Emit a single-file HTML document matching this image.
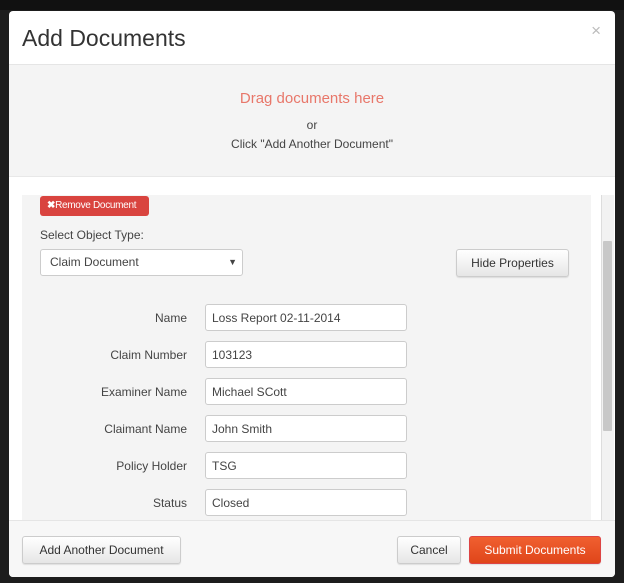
<!DOCTYPE html>
<html><head><style>
body{margin:0;width:624px;height:583px;background:#1d1d1d;font-family:"Liberation Sans",sans-serif;position:relative;overflow:hidden}
.topbar{position:absolute;left:0;top:0;width:624px;height:10px;background:#111}
.modal{position:absolute;left:9px;top:11px;width:606px;height:566px;background:#fff;border-radius:4px;overflow:hidden}
.hdr{position:absolute;left:0;top:0;width:606px;height:53px;border-bottom:1px solid #e5e5e5;box-shadow:0 1px 3px rgba(0,0,0,.08)}
.hdr h1{margin:0;position:absolute;left:13px;top:14px;font-size:23px;font-weight:normal;color:#333}
.x{position:absolute;right:14px;top:10px;color:#bbb;font-size:17px}
.drop{position:absolute;left:0;top:54px;width:606px;height:111px;background:#f4f4f4;border-bottom:1px solid #e8e8e8;text-align:center}
.drag{position:absolute;top:25px;width:100%;color:#e8776a;font-size:15px}
.or{position:absolute;top:53px;width:100%;color:#444;font-size:12px}
.click{position:absolute;top:72px;width:100%;color:#444;font-size:12px}
.panel{position:absolute;left:13px;top:184px;width:569px;height:330px;background:#f4f4f4}
.scroll{position:absolute;left:592px;top:184px;width:12px;height:330px;background:#f2f2f2;border-left:1px solid #ddd}
.thumb{position:absolute;left:594px;top:230px;width:9px;height:190px;background:#c8c8c8;border-radius:1px}
.rm{position:absolute;left:31px;top:185px;width:109px;height:20px;background:#d9443f;border-radius:3px;color:#fff;font-size:10px;line-height:20px;text-indent:7px;letter-spacing:-.3px}
.sot{position:absolute;left:31px;top:217px;font-size:12px;color:#444}
.sel{position:absolute;left:31px;top:238px;width:201px;height:25px;background:#fff;border:1px solid #ccc;border-radius:3px;font-size:12px;color:#444;line-height:25px;text-indent:9px}
.sel span{position:absolute;right:5px;top:0;font-size:9px}
.btn{position:absolute;border:1px solid #ccc;border-radius:3px;background:linear-gradient(#fff,#e6e6e6);font-size:12px;color:#333;text-align:center;box-shadow:0 1px 1px rgba(0,0,0,.1)}
.lbl{position:absolute;left:30px;width:148px;text-align:right;font-size:12px;color:#444}
.inp{position:absolute;left:196px;width:200px;height:25px;background:#fff;border:1px solid #ccc;border-radius:3px;font-size:12px;color:#444;line-height:26px;text-indent:6px}
.foot{position:absolute;left:0;top:509px;width:606px;height:57px;background:#f7f7f7;border-top:1px solid #e5e5e5}
</style></head><body>
<div class="topbar"></div>
<div class="modal">
<div class="hdr"><h1>Add Documents</h1><div class="x">×</div></div>
<div class="drop"><div class="drag">Drag documents here</div><div class="or">or</div><div class="click">Click "Add Another Document"</div></div>
<div class="panel"></div>
<div class="scroll"></div><div class="thumb"></div>
<div class="rm"><b>✖</b>Remove Document</div>
<div class="sot">Select Object Type:</div>
<div class="sel">Claim Document<span>▼</span></div>
<div class="btn" style="left:447px;top:238px;width:111px;height:26px;line-height:26px">Hide Properties</div>
<div class="lbl" style="top:300px">Name</div><div class="inp" style="top:293px">Loss Report 02-11-2014</div>
<div class="lbl" style="top:337px">Claim Number</div><div class="inp" style="top:330px">103123</div>
<div class="lbl" style="top:374px">Examiner Name</div><div class="inp" style="top:367px">Michael SCott</div>
<div class="lbl" style="top:411px">Claimant Name</div><div class="inp" style="top:404px">John Smith</div>
<div class="lbl" style="top:448px">Policy Holder</div><div class="inp" style="top:441px">TSG</div>
<div class="lbl" style="top:485px">Status</div><div class="inp" style="top:478px">Closed</div>
<div class="foot"></div>
<div class="btn" style="left:13px;top:525px;width:157px;height:26px;line-height:26px">Add Another Document</div>
<div class="btn" style="left:388px;top:525px;width:62px;height:26px;line-height:26px">Cancel</div>
<div class="btn" style="left:460px;top:525px;width:130px;height:26px;line-height:26px;background:linear-gradient(#f06030,#e0461a);border-color:#d44;color:#fff">Submit Documents</div>
</div>
</body></html>
